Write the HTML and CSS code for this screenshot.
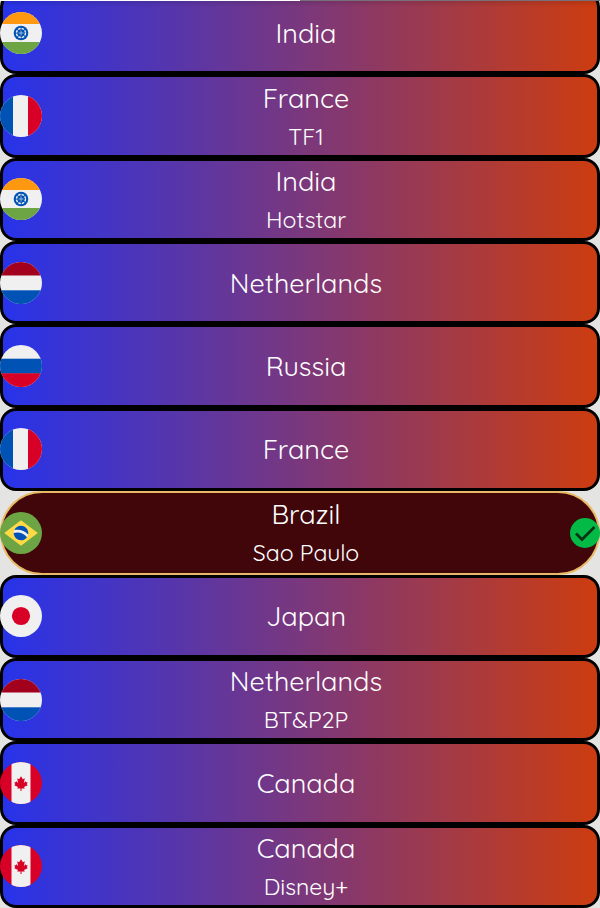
FILE: index.html
```html
<!DOCTYPE html>
<html lang="en">
	<head>
		<meta charset="UTF-8">
		<meta name="viewport" content="width=device-width, initial-scale=1.0">
		<title>Servers</title>
		<link rel="stylesheet" href="styles.css">
	</head>
	<body>
		<!-- flags and icons used by the list -->
		<svg class="sprite" aria-hidden="true">
			<clipPath id="round"><circle cx="21" cy="21" r="21"/></clipPath>
			<symbol id="india" viewBox="0 0 42 42">
				<g clip-path="url(#round)">
					<rect width="42" height="42" fill="#f0f0f0"/>
					<rect width="42" height="12" fill="#ff9811"/>
					<rect y="30" width="42" height="12" fill="#6da544"/>
				</g>
				<circle cx="21" cy="21" r="7.3" fill="#0052b4"/>
				<circle cx="21" cy="21" r="4.5" fill="none" stroke="#f0f0f0" stroke-width="1.4" stroke-dasharray="2.6 .934"/>
				<path d="M21 18.5v5M18.5 21h5" stroke="#b5cbe6" stroke-width=".8"/>
			</symbol>
			<symbol id="france" viewBox="0 0 42 42">
				<g clip-path="url(#round)">
					<rect width="42" height="42" fill="#f0f0f0"/>
					<rect width="13" height="42" fill="#0052b4"/>
					<rect x="28" width="14" height="42" fill="#d80027"/>
				</g>
			</symbol>
			<symbol id="netherlands" viewBox="0 0 42 42">
				<g clip-path="url(#round)">
					<rect width="42" height="42" fill="#f0f0f0"/>
					<rect width="42" height="13.5" fill="#a2001d"/>
					<rect y="28.3" width="42" height="14" fill="#0052b4"/>
				</g>
			</symbol>
			<symbol id="russia" viewBox="0 0 42 42">
				<g clip-path="url(#round)">
					<rect width="42" height="42" fill="#f0f0f0"/>
					<rect y="13.7" width="42" height="15" fill="#0052b4"/>
					<rect y="28.3" width="42" height="14" fill="#d80027"/>
				</g>
			</symbol>
			<symbol id="brazil" viewBox="0 0 42 42">
				<circle cx="21" cy="21" r="21" fill="#6da544"/>
				<path d="M21 8.2L37.8 21 21 33.8 4.2 21z" fill="#ffda44"/>
				<circle cx="21" cy="21" r="7.3" fill="#f0f0f0"/>
				<path d="M17.4 20.5c-1.3 0-2.5.2-3.7.55C13.7 25.1 17 28.3 21 28.3c2.5 0 4.7-1.25 6-3.15-2.35-2.85-5.8-4.65-9.6-4.65z" fill="#0052b4"/>
				<path d="M28.1 22.4c.15-.45.2-.9.2-1.4 0-4-3.3-7.3-7.3-7.3-3 0-5.55 1.8-6.7 4.4 1-.2 2.05-.3 3.1-.3 4.2 0 8 1.75 10.7 4.6z" fill="#0052b4"/>
			</symbol>
			<symbol id="japan" viewBox="0 0 42 42">
				<circle cx="21" cy="21" r="21" fill="#f0f0f0"/>
				<circle cx="21" cy="21" r="9.1" fill="#d80027"/>
			</symbol>
			<symbol id="canada" viewBox="0 0 42 42">
				<g clip-path="url(#round)">
					<rect width="42" height="42" fill="#d80027"/>
					<rect x="11.5" width="19" height="42" fill="#f0f0f0"/>
				</g>
				<path d="M21 14.3l-1.9 2.9-1.9-.9.95 4.6-2-1.9v1.3h-1.9l.95 1.9-.95.95 3.8 1.9-.95 1.4h3.4V29h1V26.45h3.4l-.95-1.4 3.8-1.9-.95-.95.95-1.9h-1.9V19l-2 1.9.95-4.6-1.9.9z" fill="#d80027"/>
			</symbol>
			<symbol id="check" viewBox="0 0 30 30">
				<circle cx="15" cy="15" r="15" fill="#04ba46"/>
				<path d="M6 15.5l6 6L24.5 9" fill="none" stroke="#0b3416" stroke-width="2.8"/>
			</symbol>
		</svg>
		<div class="loading"></div>
		<main class="servers">
			<button class="server">
				<svg class="flag"><use href="#india"/></svg>
				<span class="country">India</span>
			</button>
			<button class="server">
				<svg class="flag"><use href="#france"/></svg>
				<span class="country">France</span>
				<span class="detail">TF1</span>
			</button>
			<button class="server">
				<svg class="flag"><use href="#india"/></svg>
				<span class="country">India</span>
				<span class="detail">Hotstar</span>
			</button>
			<button class="server">
				<svg class="flag"><use href="#netherlands"/></svg>
				<span class="country">Netherlands</span>
			</button>
			<button class="server">
				<svg class="flag"><use href="#russia"/></svg>
				<span class="country">Russia</span>
			</button>
			<button class="server">
				<svg class="flag"><use href="#france"/></svg>
				<span class="country">France</span>
			</button>
			<button class="server selected" aria-pressed="true">
				<svg class="flag"><use href="#brazil"/></svg>
				<span class="country">Brazil</span>
				<span class="detail">Sao Paulo</span>
				<svg class="check"><use href="#check"/></svg>
			</button>
			<button class="server">
				<svg class="flag"><use href="#japan"/></svg>
				<span class="country">Japan</span>
			</button>
			<button class="server">
				<svg class="flag"><use href="#netherlands"/></svg>
				<span class="country">Netherlands</span>
				<span class="detail">BT&amp;P2P</span>
			</button>
			<button class="server">
				<svg class="flag"><use href="#canada"/></svg>
				<span class="country">Canada</span>
			</button>
			<button class="server">
				<svg class="flag"><use href="#canada"/></svg>
				<span class="country">Canada</span>
				<span class="detail">Disney+</span>
			</button>
		</main>
	</body>
</html>
```
FILE: styles.css
```css
:root{
	--blue:#2733ea;
	--red:#cc3c10;
	--gold:#e8b965;
	--selected:#40060a;
}
body{
	margin:0;
	height:100vh;
	overflow:hidden;
	background-color:#e4e4e2;
	font-family:Quicksand, Lato, sans-serif;
}
.sprite{
	position:absolute;
	width:0;
	height:0;
}
.loading{
	position:absolute;
	z-index:1;
	top:0;
	left:0;
	right:0;
	height:1px;
	background:linear-gradient(to right, white 50%, #77707a 50%);
	box-shadow:0 1px 4px rgba(0,0,0,0.5);
}
/* the list is scrolled a little under the loading bar */
.servers{
	display:grid;
	grid-auto-rows:1fr;
	min-height:calc(100vh + 9px);
	margin-top:-9px;
}
.server{
	position:relative;
	display:flex;
	flex-direction:column;
	align-items:center;
	justify-content:center;
	padding:0 0 0 12px;
	border:3px solid black;
	border-radius:16px;
	background:linear-gradient(to right, var(--blue), var(--red));
	color:white;
	font-family:inherit;
	font-weight:450;
	cursor:pointer;
}
.server.selected{
	border:2px solid var(--gold);
	border-radius:42px;
	background:var(--selected);
}
.country{
	font-size:27px;
	line-height:40px;
}
.detail{
	font-size:23px;
	line-height:37px;
}
.flag, .check{
	position:absolute;
	top:0;
	bottom:0;
	margin:auto 0;
}
.flag{
	left:-3px;
	width:42px;
	height:42px;
}
.check{
	right:-2px;
	width:30px;
	height:30px;
}
.selected .flag{
	left:-2px;
}
```
